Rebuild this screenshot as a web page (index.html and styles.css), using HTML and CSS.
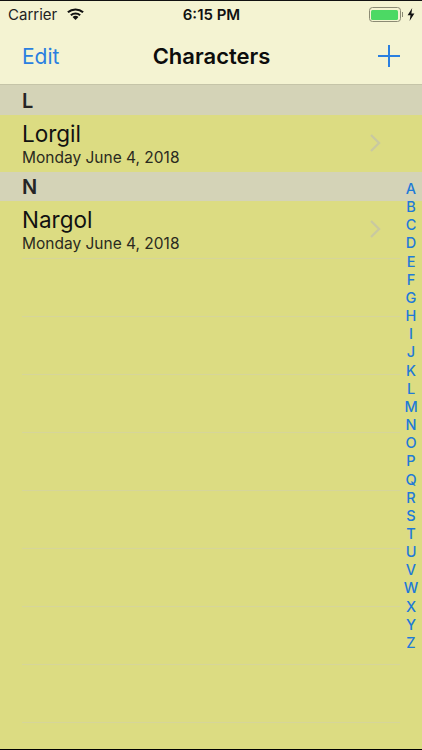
FILE: index.html
```html
<!DOCTYPE html>
<html lang="en">
<head>
<meta charset="utf-8">
<title>Characters</title>
<link rel="stylesheet" href="styles.css">
</head>
<body>
<div class="screen">
  <header class="chrome">
    <div class="status">
      <div class="status-left">
        <span>Carrier</span>
        <svg class="wifi" width="19" height="13" viewBox="0 0 18 13" preserveAspectRatio="none"><path d="M9 13 6.2 9.9a4.2 4.2 0 0 1 5.6 0Z" fill="#111"/><path d="M4.6 8.2a6.6 6.6 0 0 1 8.8 0" fill="none" stroke="#111" stroke-width="2"/><path d="M1.8 5.2a10.6 10.6 0 0 1 14.4 0" fill="none" stroke="#111" stroke-width="2"/></svg>
      </div>
      <div class="status-time">6:15 PM</div>
      <div class="status-right">
        <span class="battery"><span class="battery-fill"></span></span>
        <span class="battery-cap"></span>
        <svg class="bolt" width="8" height="13" viewBox="0 0 8 13"><path d="M5.2 0 0.6 7.2h2.9L2.6 13l4.8-7.4H4.4Z" fill="#111"/></svg>
      </div>
    </div>
    <nav class="navbar">
      <span class="edit">Edit</span>
      <span class="title">Characters</span>
      <svg class="plus" width="24" height="24" viewBox="0 0 24 24"><path d="M12 1v22M1 12h22" stroke="#2a7fe0" stroke-width="2" fill="none"/></svg>
    </nav>
  </header>
  <main class="list">
    <div class="section">L</div>
    <div class="row">
      <div class="row-text"><div class="name">Lorgil</div><div class="date">Monday June 4, 2018</div></div>
      <svg class="chev" width="13" height="20" viewBox="0 0 13 20"><path d="M2 2l8 8-8 8" fill="none" stroke="#c9c9a0" stroke-width="2.4"/></svg>
    </div>
    <div class="section">N</div>
    <div class="row">
      <div class="row-text"><div class="name">Nargol</div><div class="date">Monday June 4, 2018</div></div>
      <svg class="chev" width="13" height="20" viewBox="0 0 13 20"><path d="M2 2l8 8-8 8" fill="none" stroke="#c9c9a0" stroke-width="2.4"/></svg>
    </div>
    <div class="empty-row"></div>
    <div class="empty-row"></div>
    <div class="empty-row"></div>
    <div class="empty-row"></div>
    <div class="empty-row"></div>
    <div class="empty-row"></div>
    <div class="empty-row"></div>
    <div class="empty-row"></div>
    <div class="empty-row"></div>
  </main>
  <aside class="index">
    <span>A</span><span>B</span><span>C</span><span>D</span><span>E</span><span>F</span><span>G</span><span>H</span><span>I</span><span>J</span><span>K</span><span>L</span><span>M</span><span>N</span><span>O</span><span>P</span><span>Q</span><span>R</span><span>S</span><span>T</span><span>U</span><span>V</span><span>W</span><span>X</span><span>Y</span><span>Z</span>
  </aside>
</div>
</body>
</html>
```
FILE: styles.css
```css
* { box-sizing: border-box; }
html, body { margin: 0; padding: 0; }
body { width: 422px; height: 750px; overflow: hidden; background: #000; font-family: Inter, "Liberation Sans", sans-serif; }
.screen { position: relative; width: 422px; height: 749px; background: #dcdc82; overflow: hidden; display: flex; flex-direction: column; border-top: 1px solid #111; }
.chrome { height: 84px; flex: none; background: #f4f3d2; border-bottom: 1px solid #c5c4a8; display: flex; flex-direction: column; }
.status { height: 27px; flex: none; display: grid; grid-template-columns: 1fr auto 1fr; align-items: center; padding: 0 7px 0 8px; font-size: 15px; color: #222; }
.status-left { display: flex; align-items: center; gap: 9px; }
.wifi { flex: none; margin-top: -2px; }
.status-time { font-weight: 600; color: #111; }
.status-right { display: flex; align-items: center; justify-content: flex-end; }
.battery { width: 32px; height: 15px; border: 1px solid #8b8a74; border-radius: 3.5px; padding: 1.5px; display: block; }
.battery-fill { display: block; height: 100%; background: #4cd964; border-radius: 1.5px; }
.battery-cap { width: 1.5px; height: 5px; background: #8b8a74; margin: 0 4px 0 1px; }
.bolt { flex: none; }
.navbar { flex: 1; display: flex; align-items: center; justify-content: space-between; padding: 0 21px 0 22px; }
.edit { font-size: 21px; color: #2a7fe0; width: 60px; }
.title { font-size: 22px; font-weight: 600; color: #0c0c0c; }
.plus { flex: none; margin-left: 36px; }
.list { flex: 1; display: flex; flex-direction: column; }
.section { height: 30px; flex: none; background: #d4d3b7; padding-left: 22px; font-size: 20px; font-weight: 600; color: #252525; display: flex; align-items: center; padding-top: 1px; }
.section + .row + .section { height: 29px; }
.row { height: 57px; flex: none; display: flex; align-items: center; justify-content: space-between; padding: 0 40px 0 22px; }
.row-text { display: flex; flex-direction: column; padding-top: 1px; }
.name { font-size: 22.5px; line-height: 27px; color: #111; }
.date { font-size: 15.5px; line-height: 21px; color: #2a2a20; }
.chev { flex: none; margin-bottom: 2px; }
.empty-row { height: 58px; flex: none; margin-left: 22px; margin-right: 22px; border-top: 1px solid #d6d59a; }
.index { position: absolute; top: 179px; right: 3px; width: 16px; height: 472px; display: flex; flex-direction: column; justify-content: space-between; align-items: center; font-size: 14.5px; line-height: 18px; font-weight: 500; color: #1f7ad8; }
```
